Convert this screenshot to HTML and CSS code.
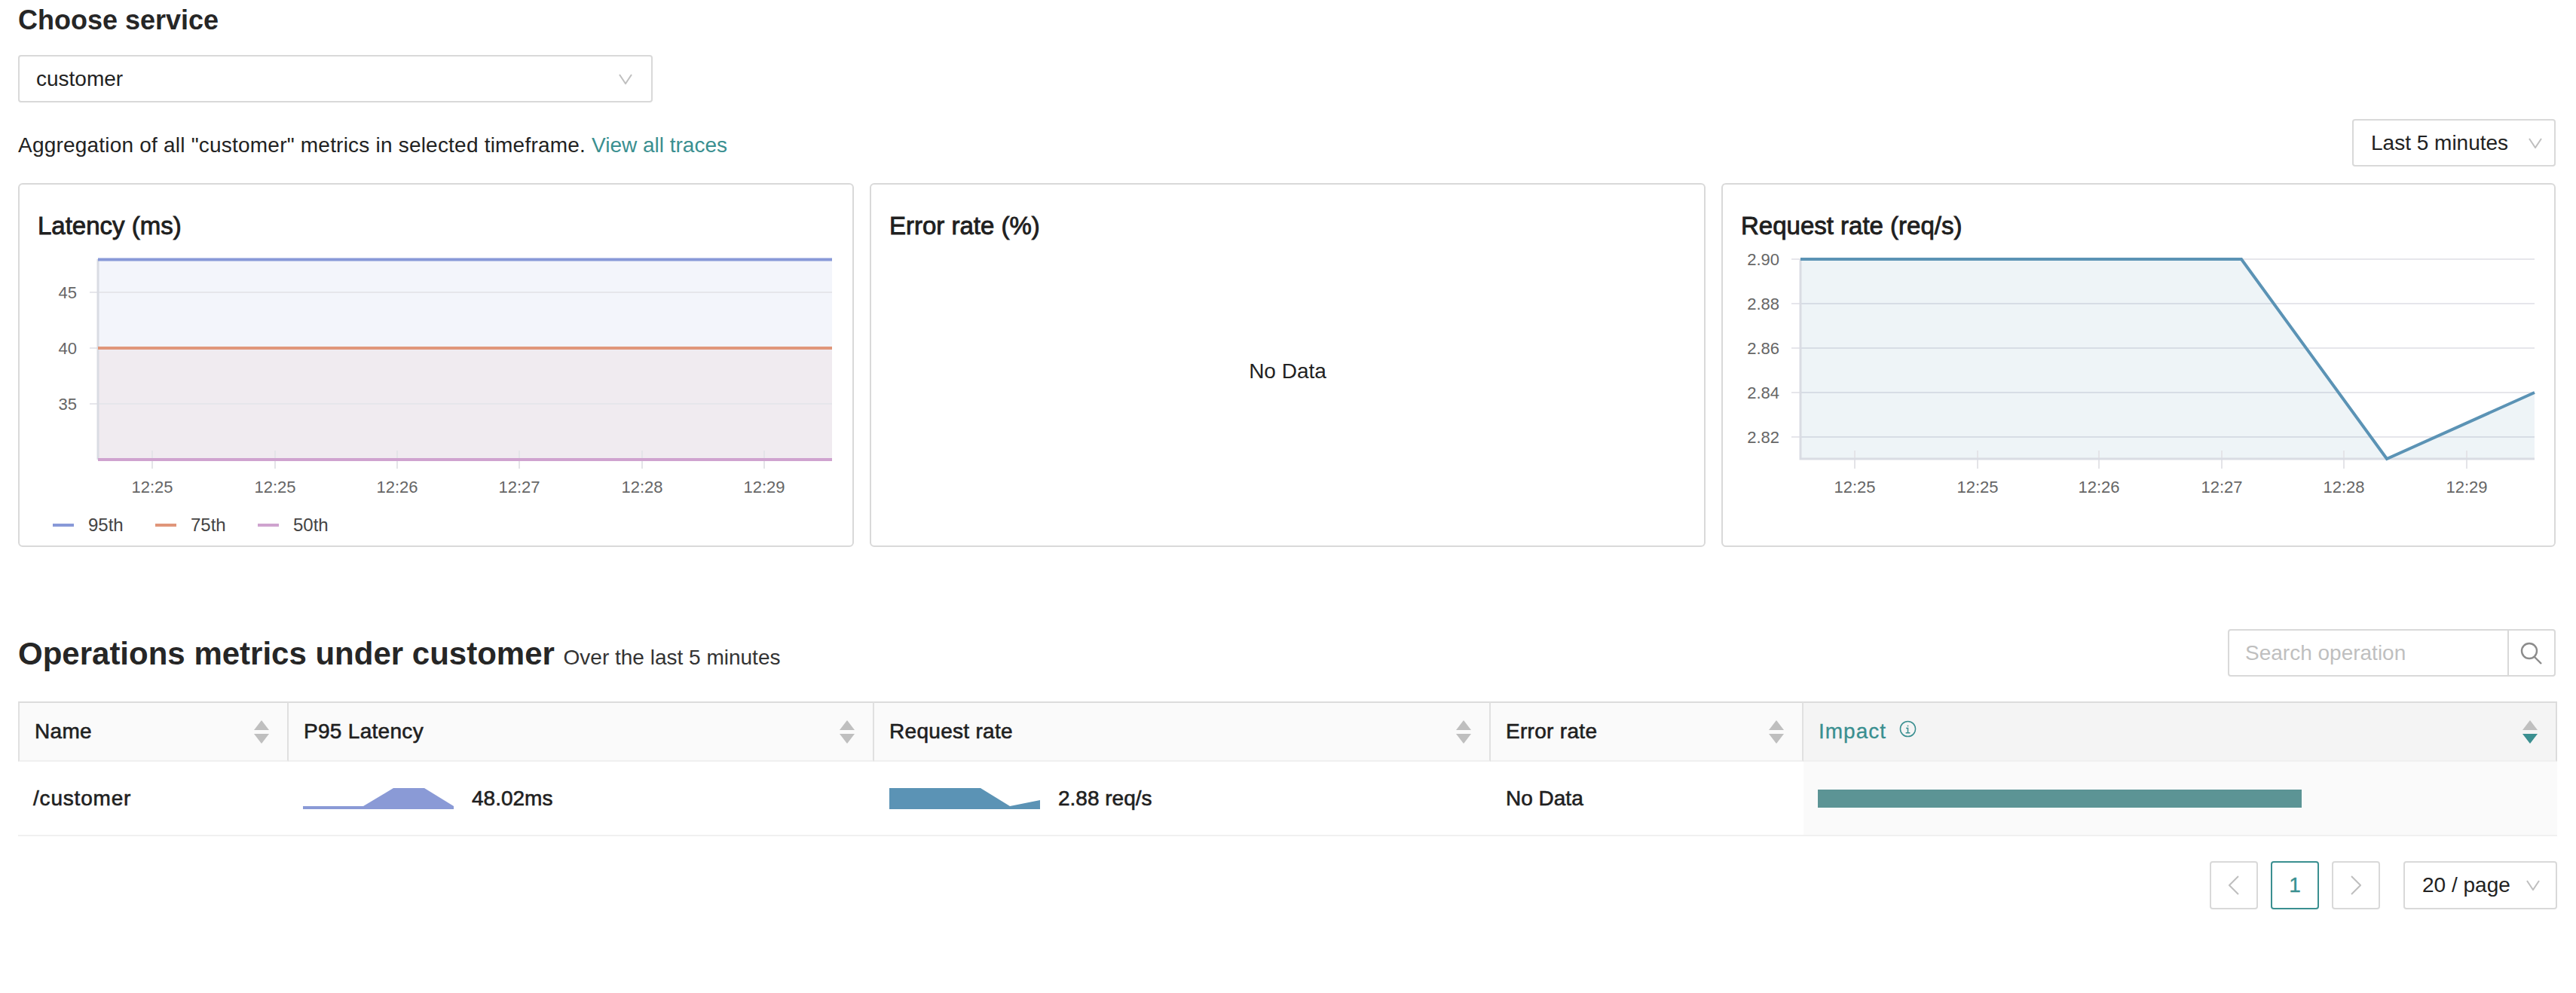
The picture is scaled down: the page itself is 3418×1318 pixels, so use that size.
FILE: index.html
```html
<!DOCTYPE html>
<html lang="en">
<head>
<meta charset="utf-8">
<title>Service monitor</title>
<link rel="stylesheet" href="styles.css">
</head>
<body>
<main class="page">
  <h2 class="choose-title">Choose service</h2>
  <div class="select service-select"><span>customer</span><svg class="chev" viewBox="0 0 18 14"><path d="M1 1 9 13 17 1"/></svg></div>

  <div class="agg-row">
    <p class="agg-text">Aggregation of all "customer" metrics in selected timeframe. <a class="link">View all traces</a></p>
    <div class="select time-select"><span>Last 5 minutes</span><svg class="chev" viewBox="0 0 18 14"><path d="M1 1 9 13 17 1"/></svg></div>
  </div>

  <section class="cards">
    <article class="card">
      <h3 class="card-title">Latency (ms)</h3>
      <svg class="chart" viewBox="26 330 1105 330">
        <rect class="fill-a" x="130" y="344" width="974" height="118"/>
        <rect class="fill-b" x="130" y="462" width="974" height="148"/>
        <path class="grid" d="M119 388H1104M119 462H1104M119 536H1104"/>
        <path class="tick" d="M202 598V622M365 598V622M527 598V622M689 598V622M852 598V622M1014 598V622"/>
        <path class="axis" d="M130 344V610"/>
        <path class="l-95" d="M130 344.500H1104"/>
        <path class="l-75" d="M130 462H1104"/>
        <path class="l-50" d="M130 610H1104"/>
        <g class="ylab">
          <text x="102" y="396">45</text><text x="102" y="470">40</text><text x="102" y="544">35</text>
        </g>
        <g class="xlab">
          <text x="202" y="654">12:25</text><text x="365" y="654">12:25</text><text x="527" y="654">12:26</text><text x="689" y="654">12:27</text><text x="852" y="654">12:28</text><text x="1014" y="654">12:29</text>
        </g>
      </svg>
      <ul class="legend">
        <li class="legend-item"><i class="swatch sw-95"></i>95th</li>
        <li class="legend-item"><i class="swatch sw-75"></i>75th</li>
        <li class="legend-item"><i class="swatch sw-50"></i>50th</li>
      </ul>
    </article>

    <article class="card">
      <h3 class="card-title">Error rate (%)</h3>
      <div class="no-data">No Data</div>
    </article>

    <article class="card">
      <h3 class="card-title">Request rate (req/s)</h3>
      <svg class="chart" viewBox="2286 330 1103 330">
        <path class="grid" d="M2377 344H3363M2377 403H3363M2377 462H3363M2377 521H3363M2377 580H3363"/>
        <polygon class="fill-r" points="2389,344 2974,344 3167,609 3363,521 3363,609 2389,609"/>
        <path class="tick" d="M2461 598V622M2624 598V622M2785 598V622M2948 598V622M3110 598V622M3273 598V622"/>
        <path class="axis" d="M2389 344V609H3363"/>
        <polyline class="l-req" points="2389,344 2974,344 3167,609 3363,521"/>
        <g class="ylab">
          <text x="2361" y="352">2.90</text><text x="2361" y="411">2.88</text><text x="2361" y="470">2.86</text><text x="2361" y="529">2.84</text><text x="2361" y="588">2.82</text>
        </g>
        <g class="xlab">
          <text x="2461" y="654">12:25</text><text x="2624" y="654">12:25</text><text x="2785" y="654">12:26</text><text x="2948" y="654">12:27</text><text x="3110" y="654">12:28</text><text x="3273" y="654">12:29</text>
        </g>
      </svg>
    </article>
  </section>

  <section class="ops-head">
    <h2 class="ops-title">Operations metrics under customer <small class="ops-sub">Over the last 5 minutes</small></h2>
    <div class="search">
      <span class="search-input">Search operation</span>
      <span class="search-btn"><svg class="search-icon" viewBox="0 0 30 30"><circle cx="12" cy="12" r="10"/><path d="M19 20 28 29"/></svg></span>
    </div>
  </section>

  <table class="ops-table">
    <colgroup><col class="c1"><col class="c2"><col class="c3"><col class="c4"><col class="c5"></colgroup>
    <thead>
      <tr>
        <th><div class="th-in"><span>Name</span><svg class="sort" viewBox="0 0 20 31"><polygon points="10,0 20,13 0,13"/><polygon points="0,18 20,18 10,31"/></svg></div></th>
        <th><div class="th-in"><span>P95 Latency</span><svg class="sort" viewBox="0 0 20 31"><polygon points="10,0 20,13 0,13"/><polygon points="0,18 20,18 10,31"/></svg></div></th>
        <th><div class="th-in"><span>Request rate</span><svg class="sort" viewBox="0 0 20 31"><polygon points="10,0 20,13 0,13"/><polygon points="0,18 20,18 10,31"/></svg></div></th>
        <th><div class="th-in"><span>Error rate</span><svg class="sort" viewBox="0 0 20 31"><polygon points="10,0 20,13 0,13"/><polygon points="0,18 20,18 10,31"/></svg></div></th>
        <th class="th-active"><div class="th-in"><span class="impact-label">Impact<svg class="info" viewBox="0 0 24 24"><circle cx="12" cy="12" r="10.500"/><path d="M12 7V8.500M9.500 11H12V17.500M9 17.500H15"/></svg></span><svg class="sort sort-desc" viewBox="0 0 20 31"><polygon points="10,0 20,13 0,13"/><polygon class="on" points="0,18 20,18 10,31"/></svg></div></th>
      </tr>
    </thead>
    <tbody>
      <tr>
        <td class="td-name">/customer</td>
        <td class="td-first-spark"><div class="metric"><svg class="spark" viewBox="0 0 200 28"><polygon class="spark-lat" points="0,28 0,24 80,24 120,0 161,0 200,24 200,28"/></svg><span>48.02ms</span></div></td>
        <td><div class="metric"><svg class="spark" viewBox="0 0 200 28"><polygon class="spark-req" points="0,0 121,0 160,24 200,16 200,28 0,28"/></svg><span>2.88 req/s</span></div></td>
        <td class="td-strong">No Data</td>
        <td class="td-impact"><div class="impact-bar"></div></td>
      </tr>
    </tbody>
  </table>

  <nav class="pager">
    <span class="pg"><svg class="pg-arrow" viewBox="0 0 14 26"><path d="M13 1 1 13 13 25"/></svg></span>
    <span class="pg pg-current">1</span>
    <span class="pg"><svg class="pg-arrow" viewBox="0 0 14 26"><path d="M1 1 13 13 1 25"/></svg></span>
    <div class="select size-select"><span>20 / page</span><svg class="chev" viewBox="0 0 18 14"><path d="M1 1 9 13 17 1"/></svg></div>
  </nav>
</main>
</body>
</html>
```
FILE: styles.css
```css
* { box-sizing: border-box; }
html, body { margin: 0; background: #fff; }
body { font-family: "Liberation Sans", Arial, sans-serif; font-size: 28px; color: #222; }
.page { padding: 0 25px 0 24px; width: 3418px; }
.choose-title { margin: 0; font-size: 36px; line-height: 54px; height: 73px; font-weight: 700; color: #262626; }
.select { display: flex; align-items: center; justify-content: space-between; border: 2px solid #d9d9d9; border-radius: 4px; background: #fff; }
.chev { width: 18px; height: 14px; flex: none; }
.chev path { fill: none; stroke: #bfbfbf; stroke-width: 2; }
.service-select { width: 842px; height: 63px; padding: 0 25px 0 22px; }
.agg-row { display: flex; align-items: center; justify-content: space-between; margin-top: 22px; height: 63px; padding-right: 2px; }
.agg-text { margin: 6px 0 0; letter-spacing: 0.21px; }
.link { color: #3a8f90; letter-spacing: 0; }
.time-select { width: 270px; height: 63px; padding: 0 16px 0 23px; }
.cards { display: grid; grid-template-columns: 1109px 1109px 1107px; column-gap: 21px; margin-top: 22px; }
.card { border: 2px solid #d9d9d9; border-radius: 6px; height: 483px; display: flex; flex-direction: column; }
.card-title { margin: 0; padding: 35px 0 0 24px; font-size: 33px; line-height: 40px; font-weight: 400; color: #1f1f1f; -webkit-text-stroke: 0.9px #1f1f1f; height: 85px; }
.chart { display: block; width: 100%; height: 330px; flex: none; }
.fill-a { fill: #f3f5fb; }
.fill-b { fill: #f0ebf0; }
.fill-r { fill: #5b93b5; fill-opacity: 0.1; }
.grid { stroke: #e6e6eb; stroke-width: 2; fill: none; }
.tick { stroke: #e4e4e8; stroke-width: 2; fill: none; }
.axis { stroke: #d9dce3; stroke-width: 3; fill: none; }
.l-95 { stroke: #8899d8; stroke-width: 4; }
.l-75 { stroke: #e0967a; stroke-width: 4; }
.l-50 { stroke: #cfa3cf; stroke-width: 4; }
.l-req { stroke: #5b93b5; stroke-width: 4; fill: none; }
.ylab text { font-size: 22px; fill: #666; text-anchor: end; }
.xlab text { font-size: 22px; fill: #666; text-anchor: middle; }
.legend { list-style: none; margin: 22px 0 0; padding: 0 0 0 44px; display: flex; gap: 19px; }
.legend-item { display: flex; align-items: center; gap: 19px; font-size: 24px; line-height: 30px; color: #444; width: 117px; }
.swatch { display: block; width: 28px; height: 4px; }
.sw-95 { background: #8899d8; }
.sw-75 { background: #e0967a; }
.sw-50 { background: #cfa3cf; }
.no-data { flex: 1; display: flex; justify-content: center; padding-top: 146px; line-height: 34px; }
.ops-head { display: flex; align-items: center; justify-content: space-between; margin-top: 109px; height: 63px; padding-right: 2px; }
.ops-title { margin: 7px 0 0; font-size: 42px; line-height: 63px; font-weight: 700; color: #262626; }
.ops-sub { font-size: 28px; font-weight: 400; color: #333; }
.search { display: flex; width: 435px; height: 63px; border: 2px solid #d9d9d9; border-radius: 4px; }
.search-input { flex: 1; padding-left: 21px; line-height: 60px; color: #bfbfbf; }
.search-btn { width: 62px; flex: none; border-left: 2px solid #d9d9d9; display: flex; align-items: center; justify-content: center; }
.search-icon { width: 30px; height: 30px; }
.search-icon circle, .search-icon path { fill: none; stroke: #8c8c8c; stroke-width: 2.400; }
.ops-table { margin-top: 33px; width: 3369px; border-collapse: separate; border-spacing: 0; table-layout: fixed; }
.c1 { width: 359px; } .c2 { width: 777px; } .c3 { width: 818px; } .c4 { width: 415px; } .c5 { width: 1000px; }
th { height: 80px; padding: 0 24px 0 20px; background: #fafafa; border-top: 2px solid #dcdcdc; border-bottom: 2px solid #f0f0f0; border-right: 2px solid #e0e0e0; font-size: 28px; font-weight: 400; letter-spacing: 0.3px; text-align: left; color: #1f1f1f; -webkit-text-stroke: 0.6px #1f1f1f; }
th:first-child { border-left: 2px solid #e0e0e0; }
.th-in { display: flex; align-items: center; justify-content: space-between; }
.th-active { background: #f4f4f4; border-right-color: #dcdcdc; }
.impact-label { display: flex; align-items: center; letter-spacing: 1px; color: #3a8f90; -webkit-text-stroke: 0.3px #3a8f90; }
.info { width: 23px; height: 23px; margin: 0 0 8px 17px; }
.info circle, .info path { fill: none; stroke: #3a8f90; stroke-width: 1.600; }
.sort { width: 20px; height: 31px; flex: none; fill: #bfbfbf; }
.sort .on { fill: #3a8f90; }
td { height: 99px; padding: 0 20px; border-bottom: 2px solid #f0f0f0; font-size: 28px; color: #1f1f1f; }
.td-name { letter-spacing: 0.8px; -webkit-text-stroke: 0.6px #1f1f1f; }
.td-strong { -webkit-text-stroke: 0.6px #1f1f1f; }
.td-first-spark { padding-left: 19px; }
.metric { display: flex; align-items: center; gap: 24px; -webkit-text-stroke: 0.6px #1f1f1f; }
.spark { width: 200px; height: 28px; flex: none; }
.spark-lat { fill: #8a9ad6; }
.spark-req { fill: #5b93b5; }
.td-impact { background: #fafafa; padding: 0 19px; }
.impact-bar { width: 642px; height: 24px; background: #5c9495; }
.pager { display: flex; justify-content: flex-end; align-items: center; gap: 17px; margin-top: 33px; }
.pg { width: 64px; height: 64px; border: 2px solid #d9d9d9; border-radius: 4px; display: flex; align-items: center; justify-content: center; }
.pg-arrow { width: 14px; height: 26px; }
.pg-arrow path { fill: none; stroke: #bfbfbf; stroke-width: 2; }
.pg-current { border-color: #3a8f90; color: #3a8f90; -webkit-text-stroke: 0.3px #3a8f90; }
.size-select { width: 204px; height: 64px; margin-left: 14px; padding: 0 21px 0 23px; }
```
